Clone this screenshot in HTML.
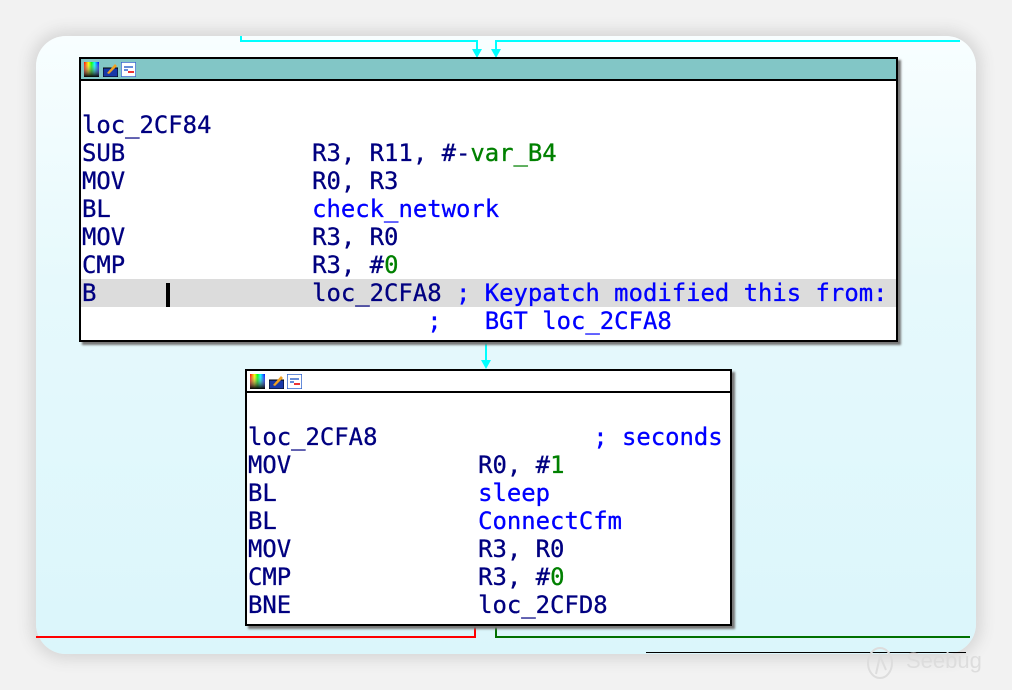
<!DOCTYPE html>
<html><head><meta charset="utf-8"><style>
body{margin:0;width:1012px;height:690px;background:#f2f2f2;position:relative;overflow:hidden;font-family:"DejaVu Sans Mono","Liberation Mono",monospace}
.card{position:absolute;left:36px;top:36px;width:940px;height:618px;border-radius:30px;background:linear-gradient(#f8feff,#e6f9fc 40%,#dbf6fb);box-shadow:0 0 14px 6px #d8d8d8}
.l{position:absolute}
.box{position:absolute;background:#fff;border:2px solid #000;box-shadow:3px 3px 2px #777}
.hd{position:absolute;left:0;right:0;top:0;height:20px;border-bottom:2px solid #000}
.t{position:absolute;white-space:pre;font-size:23.9px;line-height:28px;color:#000080;-webkit-text-stroke:0.3px currentColor}
.b{color:#0000ff}.g{color:#008000}
.ic{position:absolute;top:3px;width:15px;height:15px}
</style></head><body>
<div class="card"></div>
<div class="l" style="left:240px;top:36px;width:2px;height:5px;background:#0ff"></div>
<div class="l" style="left:240px;top:40px;width:238px;height:2px;background:#0ff"></div>
<div class="l" style="left:476px;top:40px;width:2px;height:12px;background:#0ff"></div>
<div class="l" style="left:472px;top:49px;border-left:5px solid transparent;border-right:5px solid transparent;border-top:9px solid #0ff"></div>
<div class="l" style="left:495px;top:40px;width:465px;height:2px;background:#0ff"></div>
<div class="l" style="left:495px;top:40px;width:2px;height:12px;background:#0ff"></div>
<div class="l" style="left:491px;top:49px;border-left:5px solid transparent;border-right:5px solid transparent;border-top:9px solid #0ff"></div>
<div class="l" style="left:485px;top:342px;width:2px;height:20px;background:#0ff"></div>
<div class="l" style="left:481px;top:360px;border-left:5px solid transparent;border-right:5px solid transparent;border-top:9px solid #0ff"></div>
<div class="l" style="left:474px;top:626px;width:2px;height:12px;background:#f00"></div>
<div class="l" style="left:36px;top:636px;width:440px;height:2px;background:#f00"></div>
<div class="l" style="left:495px;top:626px;width:2px;height:12px;background:#007000"></div>
<div class="l" style="left:495px;top:636px;width:475px;height:2px;background:#007000"></div>
<div class="l" style="left:646px;top:652px;width:320px;height:1px;background:#000"></div>

<svg width="0" height="0" style="position:absolute"><defs><linearGradient id="a" x1="0" x2="1"><stop offset="0" stop-color="#f00"/><stop offset=".3" stop-color="#ff0"/><stop offset=".5" stop-color="#0f0"/><stop offset=".7" stop-color="#0ff"/><stop offset="1" stop-color="#00f"/></linearGradient><linearGradient id="k" y1="0" y2="1" x1="0" x2="0"><stop offset="0" stop-color="#fff" stop-opacity="0"/><stop offset="1" stop-color="#000"/></linearGradient></defs></svg>

<div class="box" style="left:79px;top:57px;width:815px;height:281px">
<div class="hd" style="background:#82c6c6"></div>
<svg class="ic" style="left:3px" viewBox="0 0 15 15"><rect width="15" height="15" fill="url(#a)"/><rect width="15" height="15" fill="url(#k)"/></svg>
<svg class="ic" style="left:22px" viewBox="0 0 15 15"><rect x="0" y="6" width="15" height="9" fill="#1838a8" stroke="#000" stroke-width="1"/><path d="M4 11 L12 2 L14 4 L6 12Z" fill="#f0a020"/></svg>
<svg class="ic" style="left:40px" viewBox="0 0 15 15"><rect width="15" height="15" fill="#fff" stroke="#36c" stroke-width="1.5"/><path d="M3 5h9M3 8h4M8 10h5" stroke="#36c" stroke-width="1.5"/><rect x="7" y="9" width="6" height="2" fill="#e33"/></svg>
<div class="l" style="left:0;right:0;top:220px;height:28px;background:#dcdcdc"></div>
<div class="l" style="left:85px;top:224px;width:4px;height:24px;background:#000"></div>
<div class="t" style="left:1px;top:52px">loc_2CF84
SUB             R3, R11, #-<span class="g">var_B4</span>
MOV             R0, R3
BL              <span class="b">check_network</span>
MOV             R3, R0
CMP             R3, #<span class="g">0</span>
B               loc_2CFA8 <span class="b">; Keypatch modified this from:</span>
<span class="b">                        ;   BGT loc_2CFA8</span></div>
</div>

<div class="box" style="left:245px;top:369px;width:483px;height:253px">
<div class="hd" style="background:#fff"></div>
<svg class="ic" style="left:3px" viewBox="0 0 15 15"><rect width="15" height="15" fill="url(#a)"/><rect width="15" height="15" fill="url(#k)"/></svg>
<svg class="ic" style="left:22px" viewBox="0 0 15 15"><rect x="0" y="6" width="15" height="9" fill="#1838a8" stroke="#000" stroke-width="1"/><path d="M4 11 L12 2 L14 4 L6 12Z" fill="#f0a020"/></svg>
<svg class="ic" style="left:40px" viewBox="0 0 15 15"><rect width="15" height="15" fill="#fff" stroke="#36c" stroke-width="1.5"/><path d="M3 5h9M3 8h4M8 10h5" stroke="#36c" stroke-width="1.5"/><rect x="7" y="9" width="6" height="2" fill="#e33"/></svg>
<div class="t" style="left:1px;top:52px">loc_2CFA8               <span class="b">; seconds</span>
MOV             R0, #<span class="g">1</span>
BL              <span class="b">sleep</span>
BL              <span class="b">ConnectCfm</span>
MOV             R3, R0
CMP             R3, #<span class="g">0</span>
BNE             loc_2CFD8</div>
</div>

<svg class="l" style="left:866px;top:644px" width="30" height="40" viewBox="0 0 30 40"><ellipse cx="14" cy="19" rx="12" ry="15" fill="none" stroke="#ddd" stroke-width="2"/><path d="M10 30 L14 12 L20 26" fill="none" stroke="#ddd" stroke-width="2"/></svg>
<div class="l" style="left:906px;top:648px;font-family:'Liberation Sans',sans-serif;font-size:22px;color:#ddd">Seebug</div>
</body></html>
